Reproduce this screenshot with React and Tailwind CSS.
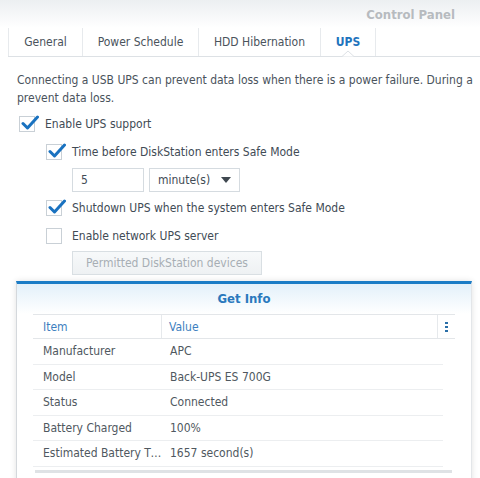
import React from 'react';

const FONT = { fontFamily: '"DejaVu Sans Condensed", "DejaVu Sans", Verdana, sans-serif' };

const Check = ({ checked }) => (
  <div className="relative w-[16px] h-[16px] border border-[#c9d0d6] bg-white shrink-0">
    {checked && (
      <svg className="absolute left-[1px] -top-[3px]" width="18" height="18" viewBox="0 0 18 18">
        <path d="M2 9.5 L6.5 14 L16.5 3" fill="none" stroke="#1a72c0" strokeWidth="3" strokeLinecap="round" strokeLinejoin="round" />
      </svg>
    )}
  </div>
);

const CheckRow = ({ checked, label, indent }) => (
  <div className={`flex items-center h-[16px] ${indent}`}>
    <Check checked={checked} />
    <span className="ml-[10px] text-[12px] text-[#414b55] whitespace-nowrap">{label}</span>
  </div>
);

const rows = [
  ['Manufacturer', 'APC'],
  ['Model', 'Back-UPS ES 700G'],
  ['Status', 'Connected'],
  ['Battery Charged', '100%'],
  ['Estimated Battery Time', '1657 second(s)'],
];

export default function App() {
  const tabs = [
    { name: 'General', w: 'w-[74px]' },
    { name: 'Power Schedule', w: 'w-[116px]' },
    { name: 'HDD Hibernation', w: 'w-[122px]' },
    { name: 'UPS', w: 'w-[55px]', active: true },
  ];

  return (
    <div className="w-[480px] h-[478px] overflow-hidden bg-white relative" style={FONT}>
      {/* title bar */}
      <div className="h-[28px] bg-gradient-to-b from-[#eceff1] to-white flex items-center justify-end pr-[25px] pt-[2px]">
        <span className="text-[13px] font-bold text-[#b7bbbf]">Control Panel</span>
      </div>

      {/* tabs */}
      <div className="relative ml-[8px] h-[29px] border-b border-[#dde1e5] flex">
        {tabs.map((t) => (
          <div
            key={t.name}
            className={`${t.w} h-full flex items-center justify-center text-[12px] border-l border-[#e7eaed] ${
              t.active ? 'text-[#1f74bd] font-bold' : 'text-[#4a535c]'
            }`}
          >
            {t.name}
          </div>
        ))}
        <div className="w-0 h-full border-l border-[#e7eaed]" />
        <svg className="absolute left-[334px] -bottom-[1px]" width="12" height="7" viewBox="0 0 12 7">
          <path d="M0 6.5 L6 1 L12 6.5" fill="white" stroke="#dde1e5" strokeWidth="1" />
        </svg>
      </div>

      {/* description */}
      <div className="pl-[17px] pt-[14px] text-[12px] leading-[18px] text-[#4a535c] whitespace-nowrap">
        <div>Connecting a USB UPS can prevent data loss when there is a power failure. During a</div>
        <div>prevent data loss.</div>
      </div>

      {/* options */}
      <div className="mt-[9px] flex flex-col">
        <CheckRow checked label="Enable UPS support" indent="ml-[19px]" />
        <div className="mt-[12px]">
          <CheckRow checked label="Time before DiskStation enters Safe Mode" indent="ml-[46px]" />
        </div>
        <div className="mt-[8px] ml-[72px] flex gap-[5px] h-[24px]">
          <div className="w-[72px] h-full border border-[#d5dbe0] flex items-center pl-[8px] text-[12px] text-[#414b55]">5</div>
          <div className="w-[91px] h-full border border-[#d5dbe0] flex items-center justify-between pl-[8px] pr-[8px] text-[12px] text-[#414b55]">
            <span>minute(s)</span>
            <svg width="10" height="6" viewBox="0 0 10 6">
              <path d="M0 0 L10 0 L5 6 Z" fill="#3f4850" />
            </svg>
          </div>
        </div>
        <div className="mt-[8px]">
          <CheckRow checked label="Shutdown UPS when the system enters Safe Mode" indent="ml-[46px]" />
        </div>
        <div className="mt-[12px]">
          <CheckRow label="Enable network UPS server" indent="ml-[46px]" />
        </div>
        <div className="mt-[7px] ml-[72px] w-[190px] h-[24px] border border-[#d9dfe3] bg-gradient-to-b from-[#f7f9fa] to-[#eef1f3] flex items-center justify-center text-[12px] text-[#a7aeb4]">
          Permitted DiskStation devices
        </div>
      </div>

      {/* Get Info panel */}
      <div className="absolute left-[16px] top-[281px] w-[456px] h-[210px] border-t-[3px] border-[#1b7cc6] border-l border-r border-l-[#d4d8dc] border-r-[#e3e6e9] shadow-[0_0_6px_rgba(0,0,0,0.12)] bg-white">
        <div className="h-[30px] bg-gradient-to-b from-[#e3f0fa] to-white flex items-center justify-center text-[13px] font-bold text-[#2a79bd]">
          Get Info
        </div>
        <div className="ml-[16px] w-[422px]">
          <div className="h-[25px] flex items-center border-t border-b border-[#e3e6e9] text-[12px] text-[#3d7fc0] bg-white">
            <div className="w-[129px] h-full flex items-center pl-[10px] border-r border-[#e6e9ec]">Item</div>
            <div className="w-[276px] h-full flex items-center pl-[7px] border-r border-[#e6e9ec]">Value</div>
            <div className="flex-1 flex justify-center">
              <svg width="3" height="10" viewBox="0 0 3 10">
                <rect x="0" y="0" width="3" height="2" fill="#2a6fa8" />
                <rect x="0" y="4" width="3" height="2" fill="#2a6fa8" />
                <rect x="0" y="8" width="3" height="2" fill="#2a6fa8" />
              </svg>
            </div>
          </div>
          {rows.map(([k, v]) => (
            <div key={k} className="w-[410px] h-[25.5px] flex items-center border-b border-[#eceef0] text-[12px] text-[#4f5860]">
              <div className="w-[129px] pl-[10px] truncate">{k}</div>
              <div className="pl-[8px]">{v}</div>
            </div>
          ))}
          <div className="mt-[3px] ml-[2px] w-[417px] h-[3px] bg-[#dfe2e5]" />
        </div>
      </div>
    </div>
  );
}
